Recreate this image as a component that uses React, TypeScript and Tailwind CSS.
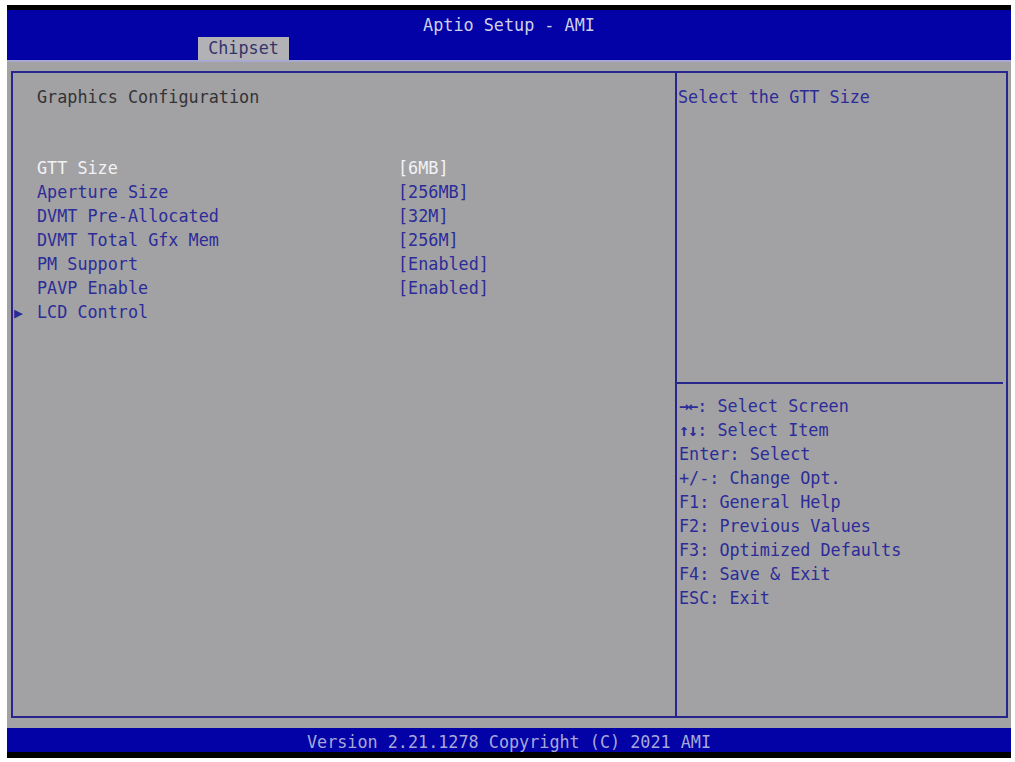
import React from 'react'

const MONO = { fontFamily: '"DejaVu Sans Mono", "Liberation Mono", monospace' }

const items: { label: string; value?: string; selected?: boolean; sub?: boolean }[] = [
  { label: 'GTT Size', value: '[6MB]', selected: true },
  { label: 'Aperture Size', value: '[256MB]' },
  { label: 'DVMT Pre-Allocated', value: '[32M]' },
  { label: 'DVMT Total Gfx Mem', value: '[256M]' },
  { label: 'PM Support', value: '[Enabled]' },
  { label: 'PAVP Enable', value: '[Enabled]' },
  { label: 'LCD Control', sub: true },
]

const help: [string, string][] = [
  ['→←', ': Select Screen'],
  ['↑↓', ': Select Item'],
  ['', 'Enter: Select'],
  ['', '+/-: Change Opt.'],
  ['', 'F1: General Help'],
  ['', 'F2: Previous Values'],
  ['', 'F3: Optimized Defaults'],
  ['', 'F4: Save & Exit'],
  ['', 'ESC: Exit'],
]

export default function App() {
  return (
    <div className="w-[1015px] h-[762px] bg-white pt-[5px] pl-[7px]" style={MONO}>
      <div className="w-[1004px] h-[753px] flex flex-col text-[16.8px] leading-[24px]">
        {/* header */}
        <div className="h-[55px] bg-[#0202a6] border-t-[5px] border-black relative">
          <div className="text-center text-[#d0d0e8] pt-[3px]">Aptio Setup - AMI</div>
          <div className="absolute left-[191px] bottom-0 w-[91px] h-[23px] bg-[#b2b2b6] text-[#34346a] text-center leading-[23px]">
            Chipset
          </div>
        </div>
        <div className="h-[2px] bg-[#a8a8d0]" />

        {/* body */}
        <div className="flex-1 bg-[#a2a2a4] pt-[9px] pl-[4px] pr-[3px] pb-[10px] flex">
          <div className="flex-1 flex border-2 border-[#26268c]">
            {/* left column */}
            <div className="w-[664px] border-r-2 border-[#26268c] pt-[12px] pl-[24px]">
              <div className="text-[#333336]">Graphics Configuration</div>
              <div className="h-[47px]" />
              {items.map(it => (
                <div key={it.label} className="flex relative">
                  {it.sub && <span className="absolute left-[-23px] top-[1px] text-[#2a2a96] text-[15px]">▶</span>}
                  <span className={`w-[361px] ${it.selected ? 'text-[#f2f2f6]' : 'text-[#2c2c98]'}`}>{it.label}</span>
                  {it.value && <span className={it.selected ? 'text-[#f2f2f6]' : 'text-[#2c2c98]'}>{it.value}</span>}
                </div>
              ))}
            </div>

            {/* right column */}
            <div className="flex-1 flex flex-col text-[#2c2c98]">
              <div className="h-[309px] pt-[12px] pl-[1px]">Select the GTT Size</div>
              <div className="h-[2px] bg-[#26268c] mr-[3px]" />
              <div className="pt-[10px] pl-[2px]">
                {help.map(([a, t]) => (
                  <div key={t}>
                    {a && <span className="font-bold tracking-[-1px]">{a}</span>}
                    {t}
                  </div>
                ))}
              </div>
            </div>
          </div>
        </div>

        {/* footer */}
        <div className="h-[30px] bg-[#0202a6] border-b-[6px] border-black text-center text-[#a8a8d8] leading-[24px] pt-[2px]">
          Version 2.21.1278 Copyright (C) 2021 AMI
        </div>
      </div>
    </div>
  )
}
